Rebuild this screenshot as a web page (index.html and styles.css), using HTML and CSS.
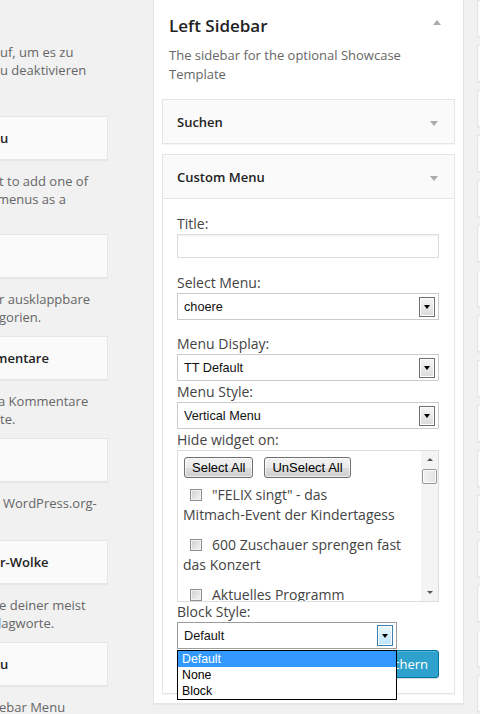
FILE: index.html
```html
<!DOCTYPE html>
<html>
<head>
<meta charset="utf-8">
<link rel="stylesheet" href="styles.css">
</head>
<body>
<div class="page">
  <div class="avail">
    <div class="intro">
      <div class="ln">uf, um es zu</div>
      <div class="ln">u deaktivieren</div>
    </div>
    <div class="wbox"><span class="wt">u</span></div>
    <div class="wdesc first">
      <div class="ln c1">t to add one of</div>
      <div class="ln c3">menus as a</div>
      <div class="ln">&nbsp;</div>
    </div>
    <div class="wbox"></div>
    <div class="wdesc">
      <div class="ln c1">r ausklappbare</div>
      <div class="ln c1">gorien.</div>
    </div>
    <div class="wbox"><span class="wt c5">mentare</span></div>
    <div class="wdesc">
      <div class="ln c2">a Kommentare</div>
      <div class="ln">te.</div>
    </div>
    <div class="wbox"></div>
    <div class="wdesc">
      <div class="ln sp3">WordPress.org-</div>
      <div class="ln">&nbsp;</div>
    </div>
    <div class="wbox"><span class="wt">r-Wolke</span></div>
    <div class="wdesc">
      <div class="ln c1">e deiner meist</div>
      <div class="ln c2">lagworte.</div>
    </div>
    <div class="wbox"><span class="wt">u</span></div>
    <div class="wdesc">
      <div class="ln c1">ebar Menu</div>
    </div>
  </div>

  <div class="holder">
    <div class="sb-head">
      <h2>Left Sidebar</h2>
      <span class="tri-up"></span>
    </div>
    <p class="sb-desc">The sidebar for the optional Showcase<br>Template</p>

    <div class="widget">
      <div class="w-top"><span>Suchen</span><span class="tri-down"></span></div>
    </div>

    <div class="widget last">
      <div class="w-top"><span>Custom Menu</span><span class="tri-down"></span></div>
      <div class="w-inside">
        <div class="f f-title">
          <label class="lbl">Title:</label>
          <div class="txt"></div>
        </div>
        <div class="f f-menu">
          <label class="lbl">Select Menu:</label>
          <div class="sel"><span>choere</span><span class="arrow"><i></i></span></div>
        </div>
        <label class="lbl tall">Menu Display:</label>
        <div class="sel"><span>TT Default</span><span class="arrow"><i></i></span></div>
        <label class="lbl tall">Menu Style:</label>
        <div class="sel"><span>Vertical Menu</span><span class="arrow"><i></i></span></div>
        <label class="lbl tall">Hide widget on:</label>
        <div class="hbox">
          <div class="hlist">
            <div class="btnrow">
              <span class="wbtn">Select All</span>
              <span class="wbtn">UnSelect All</span>
            </div>
            <div class="item"><span class="cb"></span>"FELIX singt" - das<br>Mitmach-Event der Kindertagess</div>
            <div class="item"><span class="cb"></span>600 Zuschauer sprengen fast<br>das Konzert</div>
            <div class="item"><span class="cb"></span>Aktuelles Programm</div>
          </div>
          <div class="scroll">
            <div class="sarrow"><i class="up"></i></div>
            <div class="thumb"></div>
            <div class="strack"></div>
            <div class="sarrow"><i class="down"></i></div>
          </div>
        </div>
        <label class="lbl">Block Style:</label>
        <div class="sel open">
          <span>Default</span><span class="arrow"><i></i></span>
          <div class="dd">
            <div class="opt on">Default</div>
            <div class="opt">None</div>
            <div class="opt">Block</div>
          </div>
        </div>
        <div class="actions">
          <span class="save">Speichern</span>
        </div>
      </div>
    </div>
  </div>

  <div class="rcol">
    <div class="rbox"></div><div class="rbox"></div><div class="rbox"></div><div class="rbox"></div>
    <div class="rbox"></div><div class="rbox"></div><div class="rbox"></div><div class="rbox"></div>
    <div class="rbox"></div><div class="rbox"></div><div class="rbox"></div><div class="rbox"></div>
    <div class="rbox"></div><div class="rbox"></div><div class="rbox"></div><div class="rbox"></div>
  </div>
</div>
</body>
</html>
```

FILE: styles.css
```css
html, body {
  margin: 0;
  padding: 0;
}
body {
  font-family: "Open Sans", "DejaVu Sans", sans-serif;
  background: #f1f1f1;
}
.page {
  display: flex;
  width: 480px;
  height: 714px;
  overflow: hidden;
  background: #f1f1f1;
}

/* left: available widgets (clipped) */
.avail {
  flex: none;
  width: 108px;
  overflow: hidden;
  color: #666;
  font-size: 13px;
}
.ln {
  line-height: 18px;
  white-space: nowrap;
}
.c1 { text-indent: -1px; }
.c2 { text-indent: -2px; }
.c3 { text-indent: -3px; }
.c5 { text-indent: -5px; display: block; }
.sp3 { text-indent: 3px; }
.intro {
  padding-top: 43px;
  margin-bottom: 37px;
}
.wbox {
  height: 44px;
  box-sizing: border-box;
  border: 1px solid #e5e5e5;
  border-left: none;
  background: #fafafa;
  box-shadow: 0 1px 1px rgba(0, 0, 0, 0.04);
  display: flex;
  align-items: center;
  font-weight: 600;
  color: #222;
  white-space: nowrap;
  overflow: hidden;
}
.wdesc {
  padding: 12px 0 10px;
}
.wdesc.first {
  padding-bottom: 8px;
}

/* center: sidebar holder */
.holder {
  flex: none;
  align-self: flex-start;
  width: 311px;
  box-sizing: border-box;
  margin-left: 45px;
  background: #fff;
  border: 1px solid #e5e5e5;
  border-top: none;
  padding: 14px 8px 9px;
  box-shadow: 0 1px 1px rgba(0, 0, 0, 0.04);
}
.sb-head {
  display: flex;
  align-items: center;
  justify-content: space-between;
}
.sb-head h2 {
  margin: 0 0 0 7px;
  font-size: 17px;
  font-weight: 600;
  line-height: 24px;
  color: #222;
}
.tri-up {
  width: 0;
  height: 0;
  border-left: 4px solid transparent;
  border-right: 4px solid transparent;
  border-bottom: 5px solid #aaa;
  margin: 0 14px 7px 0;
}
.sb-desc {
  margin: 8px 0 15px 7px;
  font-size: 13px;
  line-height: 19px;
  color: #666;
}
.widget {
  border: 1px solid #e5e5e5;
  background: #fafafa;
  box-shadow: 0 1px 1px rgba(0, 0, 0, 0.04);
  margin-bottom: 10px;
}
.widget.last {
  margin-bottom: 0;
}
.w-top {
  height: 43px;
  display: flex;
  align-items: center;
  justify-content: space-between;
  padding: 0 16px 0 14px;
  font-size: 13px;
  font-weight: 600;
  color: #222;
}
.tri-down {
  width: 0;
  height: 0;
  border-left: 4px solid transparent;
  border-right: 4px solid transparent;
  border-top: 5px solid #aaa;
  margin-top: 3px;
}
.w-inside {
  border-top: 1px solid #e5e5e5;
  background: #fff;
  padding: 15px 15px 15px 14px;
}
.lbl {
  display: block;
  font-size: 14px;
  line-height: 20px;
  color: #444;
}
.lbl.tall {
  line-height: 21px;
}
.f-title { margin-bottom: 15px; }
.f-menu { margin-bottom: 13px; }
.txt {
  height: 24px;
  box-sizing: border-box;
  border: 1px solid #ddd;
  background: #fff;
  box-shadow: inset 0 1px 2px rgba(0, 0, 0, 0.07);
}
.sel {
  position: relative;
  height: 27px;
  box-sizing: border-box;
  border: 1px solid #ccc;
  background: #fff;
  display: flex;
  align-items: center;
  padding: 0 3px 0 6px;
  font-family: "Liberation Sans", Arial, sans-serif;
  font-size: 12.7px;
  color: #111;
}
.sel .arrow {
  margin-left: auto;
  width: 16px;
  height: 20px;
  box-sizing: border-box;
  border: 1px solid #6f6f6f;
  background: linear-gradient(#f6f6f6, #dadada);
  box-shadow: inset 0 0 0 1px #fdfdfd;
  display: flex;
  align-items: center;
  justify-content: center;
}
.sel .arrow i {
  width: 0;
  height: 0;
  border-left: 3.5px solid transparent;
  border-right: 3.5px solid transparent;
  border-top: 4px solid #000;
  margin-top: 1px;
}
.sel.open {
  width: 220px;
  border-color: #9c9c9c;
}
.sel.open .arrow {
  height: 21px;
  border-color: #3c7fb1;
  background: linear-gradient(#eaf6fd, #bee6fd);
}
.dd {
  position: absolute;
  left: -1px;
  top: 27px;
  width: 220px;
  box-sizing: border-box;
  border: 1px solid #000;
  background: #fff;
  font-size: 12.3px;
  color: #000;
  z-index: 2;
}
.opt {
  height: 16px;
  line-height: 16px;
  padding-left: 4px;
}
.opt.on {
  background: #3399ff;
  color: #fff;
}

/* hide widget list */
.hbox {
  height: 152px;
  box-sizing: border-box;
  border: 1px solid #ddd;
  display: flex;
  background: #fff;
}
.hlist {
  flex: 1;
  overflow: hidden;
  padding: 6px 0 0 5px;
  font-size: 14px;
  color: #444;
}
.btnrow {
  display: flex;
  gap: 11px;
  padding-left: 1px;
  margin-bottom: 7px;
}
.wbtn {
  height: 21px;
  box-sizing: border-box;
  border: 1px solid #707070;
  border-radius: 3px;
  background: linear-gradient(#f2f2f2 0%, #ebebeb 50%, #dddddd 51%, #cfcfcf 100%);
  box-shadow: inset 0 0 0 1px rgba(255, 255, 255, 0.6);
  padding: 0 7px;
  font-family: "Liberation Sans", Arial, sans-serif;
  font-size: 13px;
  line-height: 19px;
  color: #000;
}
.item {
  line-height: 20px;
  margin-bottom: 10px;
  white-space: nowrap;
}
.cb {
  display: inline-block;
  width: 12px;
  height: 12px;
  box-sizing: border-box;
  border: 1px solid #8f8f8f;
  background: linear-gradient(135deg, #cdcdcd, #f7f7f7);
  box-shadow: inset 0 0 0 1px #f2f2f2;
  margin: 0 10px 0 7px;
  vertical-align: -1px;
}
.scroll {
  flex: none;
  width: 17px;
  display: flex;
  flex-direction: column;
  align-items: center;
  background: #f4f4f4;
}
.sarrow {
  height: 17px;
  width: 17px;
  display: flex;
  align-items: center;
  justify-content: center;
}
.sarrow i {
  width: 0;
  height: 0;
  border-left: 3px solid transparent;
  border-right: 3px solid transparent;
}
.sarrow i.up { border-bottom: 3px solid #555; }
.sarrow i.down { border-top: 3px solid #555; }
.thumb {
  width: 15px;
  height: 15px;
  box-sizing: border-box;
  border: 1px solid #979797;
  border-radius: 2px;
  background: linear-gradient(90deg, #f3f3f3, #e2e2e2);
  box-shadow: inset 0 0 0 1px #fbfbfb;
  margin-top: 1px;
}
.strack {
  flex: 1;
}
.actions {
  display: flex;
  justify-content: flex-end;
  margin-top: 1px;
}
.save {
  height: 28px;
  box-sizing: border-box;
  padding: 0 10px;
  background: #2ea2cc;
  border: 1px solid #0074a2;
  border-radius: 3px;
  color: #fff;
  font-size: 13px;
  line-height: 26px;
  box-shadow: inset 0 1px 0 rgba(120, 200, 230, 0.5), 0 1px 0 rgba(0, 0, 0, 0.15);
}

/* right: next sidebar column (clipped) */
.rcol {
  flex: none;
  width: 3px;
  margin-left: 13px;
  display: flex;
  flex-direction: column;
  gap: 8px;
}
.rbox {
  flex: none;
  height: 37px;
  box-sizing: border-box;
  border: 1px solid #e5e5e5;
  border-right: none;
  background: #fafafa;
  box-shadow: 0 1px 1px rgba(0, 0, 0, 0.04);
}
```
